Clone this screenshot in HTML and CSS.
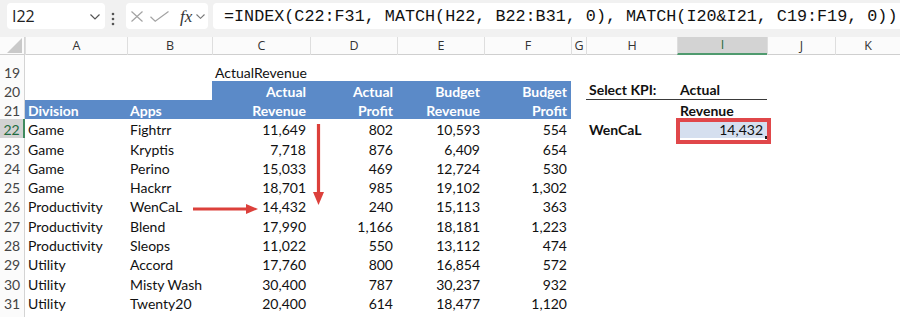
FILE: index.html
```html
<!DOCTYPE html>
<html lang="en">
<head>
    <meta charset="UTF-8">
    <title>INDEX MATCH KPI</title>
    <link rel="stylesheet" href="styles.css">
</head>
<body>
    <div class="fbar">
        <div class="namebox">
            <span>I22</span>
            <svg width="10" height="6" viewBox="0 0 10 6"><polyline points="0.5,0.5 5,5 9.5,0.5" fill="none" stroke="#555" stroke-width="1.2"/></svg>
        </div>
        <svg class="dots" width="4" height="14" viewBox="0 0 4 14"><circle cx="2" cy="2" r="1.3"/><circle cx="2" cy="7" r="1.3"/><circle cx="2" cy="12" r="1.3"/></svg>
        <div class="fbtns">
            <svg class="ic-x" width="12" height="11" viewBox="0 0 12 11"><path d="M0.5 0.5 L11.5 10.5 M11.5 0.5 L0.5 10.5" stroke="#a3a3a3" stroke-width="1.2" fill="none"/></svg>
            <svg class="ic-ok" width="19" height="11" viewBox="0 0 19 11"><polyline points="0.5,5.8 5.2,10.2 18.5,0.5" fill="none" stroke="#a3a3a3" stroke-width="1.2"/></svg>
            <span class="fx">fx</span>
            <svg class="ic-dd" width="9" height="5" viewBox="0 0 9 5"><polyline points="0.5,0.5 4.5,4.3 8.5,0.5" fill="none" stroke="#777" stroke-width="1.1"/></svg>
        </div>
        <div class="formula">=INDEX(C22:F31, MATCH(H22, B22:B31, 0), MATCH(I20&amp;I21, C19:F19, 0))</div>
    </div>

    <div class="sheet">
        <div class="row colhead">
            <div class="corner"><svg width="15" height="15" viewBox="0 0 15 15"><polygon points="15,0 15,15 0,15" fill="#c9c9c9"/></svg></div>
            <div>A</div><div>B</div><div>C</div><div>D</div><div>E</div><div>F</div><div>G</div><div>H</div><div class="on">I</div><div>J</div><div>K</div>
        </div>

        <div class="row r19">
            <div class="rn">19</div><div></div><div></div><div class="spill">ActualRevenue</div>
        </div>
        <div class="row r20">
            <div class="rn">20</div><div></div><div></div>
            <div class="hd num">Actual</div><div class="hd num">Actual</div><div class="hd num">Budget</div><div class="hd num">Budget</div>
            <div></div>
            <div class="b line">Select KPI:</div><div class="b line">Actual</div>
        </div>
        <div class="row r21">
            <div class="rn">21</div>
            <div class="hd">Division</div><div class="hd">Apps</div>
            <div class="hd num">Revenue</div><div class="hd num">Profit</div><div class="hd num">Revenue</div><div class="hd num">Profit</div>
            <div></div><div></div>
            <div class="b">Revenue</div>
        </div>

        <div class="row">
            <div class="rn on">22</div><div>Game</div><div>Fightrr</div><div class="num">11,649</div><div class="num">802</div><div class="num">10,593</div><div class="num">554</div>
            <div></div><div class="b">WenCaL</div><div class="num sel">14,432<span class="handle"></span></div>
        </div>
        <div class="row"><div class="rn">23</div><div>Game</div><div>Kryptis</div><div class="num">7,718</div><div class="num">876</div><div class="num">6,409</div><div class="num">654</div></div>
        <div class="row"><div class="rn">24</div><div>Game</div><div>Perino</div><div class="num">15,033</div><div class="num">469</div><div class="num">12,724</div><div class="num">530</div></div>
        <div class="row"><div class="rn">25</div><div>Game</div><div>Hackrr</div><div class="num">18,701</div><div class="num">985</div><div class="num">19,102</div><div class="num">1,302</div></div>
        <div class="row"><div class="rn">26</div><div>Productivity</div><div>WenCaL</div><div class="num">14,432</div><div class="num">240</div><div class="num">15,113</div><div class="num">363</div></div>
        <div class="row"><div class="rn">27</div><div>Productivity</div><div>Blend</div><div class="num">17,990</div><div class="num">1,166</div><div class="num">18,181</div><div class="num">1,223</div></div>
        <div class="row"><div class="rn">28</div><div>Productivity</div><div>Sleops</div><div class="num">11,022</div><div class="num">550</div><div class="num">13,112</div><div class="num">474</div></div>
        <div class="row"><div class="rn">29</div><div>Utility</div><div>Accord</div><div class="num">17,760</div><div class="num">800</div><div class="num">16,854</div><div class="num">572</div></div>
        <div class="row"><div class="rn">30</div><div>Utility</div><div>Misty Wash</div><div class="num">30,400</div><div class="num">787</div><div class="num">30,237</div><div class="num">932</div></div>
        <div class="row"><div class="rn">31</div><div>Utility</div><div>Twenty20</div><div class="num">20,400</div><div class="num">614</div><div class="num">18,477</div><div class="num">1,120</div></div>
        <div class="row last"><div class="rn"></div></div>
    </div>

    <!-- red annotation arrows drawn over the sheet -->
    <svg class="marks" width="900" height="317" viewBox="0 0 900 317">
        <line x1="318.5" y1="124" x2="318.5" y2="194" stroke="#dc403b" stroke-width="3.2"/>
        <polygon points="313,192 324,192 318.5,205" fill="#dc403b"/>
        <line x1="193" y1="209" x2="248" y2="209" stroke="#dc403b" stroke-width="3.2"/>
        <polygon points="246,204 258,209 246,214" fill="#dc403b"/>
    </svg>
</body>
</html>
```

FILE: styles.css
```css
body { margin: 0; background: #fff; font-family: Lato, "Open Sans", sans-serif; color: #111; width: 900px; height: 317px; overflow: hidden; position: relative; }

/* formula bar */
.fbar { display: flex; align-items: flex-start; height: 37px; padding: 3px 0 0 7px; box-sizing: border-box; background: #f1f1f1; }
.namebox { display: flex; align-items: center; justify-content: space-between; width: 98px; height: 26px; padding: 0 5px 0 5px; box-sizing: border-box; background: #fff; border-radius: 4px; font-family: "Open Sans", sans-serif; font-size: 16px; color: #222; }
.namebox svg { margin-top: 1px; }
.dots { fill: #555; margin: 9px 0 0 6px; }
.fbtns { display: flex; align-items: center; width: 82px; height: 26px; margin-left: 11px; padding-left: 5px; box-sizing: border-box; background: #fff; border-radius: 4px; }
.ic-ok { margin-left: 7px; }
.fx { margin-left: 11px; font-family: "Liberation Serif", serif; font-style: italic; font-size: 17px; color: #333; line-height: 1; }
.ic-dd { margin-left: 4px; margin-top: 1px; }
.formula { flex: 1; height: 26px; margin-left: 5px; padding-left: 11px; background: #fff; border-radius: 4px 0 0 4px; font-family: "Liberation Mono", monospace; font-size: 16.75px; line-height: 27px; color: #111; white-space: nowrap; overflow: hidden; }

/* sheet grid */
.row { display: grid; grid-template-columns: 25px 102px 85px 98px 87px 87px 87px 15px 91px 90px 68px 65px; height: 19.3px; font-size: 14px; line-height: 17px; }
.row > div { display: flex; align-items: flex-end; padding: 0 3px 0 3px; white-space: nowrap; min-width: 0; }
.row .num { justify-content: flex-end; padding-right: 4px; }
.r19 { height: 26px; }
.r20, .r21 { height: 19px; }
.last { height: 6px; }

.rn { justify-content: center; border-right: 1px solid #d4d4d4; color: #444; font-size: 14px; background: #fbfbfb; }
.row > .rn { padding: 0; }
.rn.on { background: #d2d2d2; border-right: 2px solid #3f8a5e; color: #1f6b40; }

.colhead { height: 18px; background: #fbfbfb; border-bottom: 1px solid #cfcfcf; box-sizing: border-box; font-family: "Open Sans", sans-serif; font-size: 12.5px; color: #333; line-height: 16px; }
.colhead > div { justify-content: center; align-items: center; border-left: 1px solid #dedede; padding: 0; }
.colhead > .corner { border-left: none; border-right: 1px solid #d4d4d4; align-items: flex-end; justify-content: flex-end; padding: 0 2px 2px 0; }
.colhead > .on { background: #d3d3d3; border-bottom: 2px solid #4f9a6e; color: #1f6b40; }

.spill { overflow: visible; }
.hd { background: #5b8ac8; color: #fff; font-weight: bold; }
.b { font-weight: bold; }
.line { border-bottom: 1px solid #3a3a3a; }
.row > .line { padding-bottom: 1px; }

.sel { position: relative; background: #d5dfef; }
.sel::after { content: ''; position: absolute; left: -1px; right: -4px; top: -1px; bottom: -6px; border: 4px solid #e0474a; }
.handle { position: absolute; right: -1px; bottom: -1px; width: 3px; height: 3px; background: #1e1e1e; }

.marks { position: absolute; left: 0; top: 0; pointer-events: none; }
```
